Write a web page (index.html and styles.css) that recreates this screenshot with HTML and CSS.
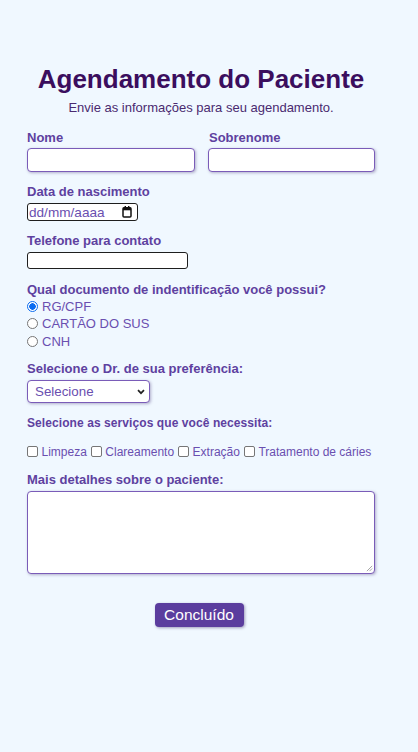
FILE: index.html
```html
<!DOCTYPE html>
<html lang="pt-BR">
<head>
<meta charset="utf-8">
<title>Agendamento do Paciente</title>
<link rel="stylesheet" href="styles.css">
</head>
<body>
<main class="page">
  <h1 class="title">Agendamento do Paciente</h1>
  <p class="subtitle">Envie as informações para seu agendamento.</p>
  <form class="form">
    <div class="name-grid">
      <div class="field">
        <label class="label" for="nome">Nome</label>
        <input class="input" id="nome" type="text">
      </div>
      <div class="field">
        <label class="label" for="sobrenome">Sobrenome</label>
        <input class="input" id="sobrenome" type="text">
      </div>
    </div>

    <label class="label label-date" for="nasc">Data de nascimento</label>
    <div class="date-box"><span class="date-text">dd/mm/aaaa</span><svg class="cal" viewBox="0 0 10 12" width="10" height="12"><rect x="1" y="1.7" width="8" height="9.3" rx="1" fill="none" stroke="#111" stroke-width="1.5"/><rect x="1" y="1.7" width="8" height="2.6" fill="#111"/><rect x="2.6" y="0" width="1.4" height="2.2" fill="#111"/><rect x="6" y="0" width="1.4" height="2.2" fill="#111"/></svg></div>

    <label class="label label-tel" for="tel">Telefone para contato</label>
    <input class="tel" id="tel" type="tel">

    <div class="label label-doc">Qual documento de indentificação você possui?</div>
    <div class="radios">
      <label class="radio-row"><span class="radio checked"></span>RG/CPF</label>
      <label class="radio-row"><span class="radio"></span>CARTÃO DO SUS</label>
      <label class="radio-row"><span class="radio"></span>CNH</label>
    </div>

    <label class="label label-dr" for="dr">Selecione o Dr. de sua preferência:</label>
    <div class="select"><span>Selecione</span><svg class="chev" viewBox="0 0 8 6" width="8" height="6"><path d="M1 1.2l3 3 3-3" fill="none" stroke="#222" stroke-width="1.7"/></svg></div>

    <div class="label label-serv">Selecione as serviços que você necessita:</div>
    <div class="checks">
      <span class="check"></span><span class="check-text">Limpeza</span>
      <span class="check"></span><span class="check-text">Clareamento</span>
      <span class="check"></span><span class="check-text">Extração</span>
      <span class="check"></span><span class="check-text">Tratamento de cáries</span>
    </div>

    <label class="label label-more" for="det">Mais detalhes sobre o paciente:</label>
    <div class="textarea"><svg class="grip" viewBox="0 0 8 8" width="7" height="7"><path d="M7 1L1 7M7 4L4 7" stroke="#999" stroke-width="1"/></svg></div>

    <div class="actions"><button class="btn" type="button">Concluído</button></div>
  </form>
</main>
</body>
</html>
```
FILE: styles.css
```css
* { box-sizing: border-box; }
html, body { margin: 0; padding: 0; }
body {
  background: #f0f8ff;
  font-family: "Liberation Sans", Arial, sans-serif;
  width: 418px;
  height: 752px;
}
.page {
  padding: 64px 43px 0 27px;
}
.title {
  margin: 0;
  font-size: 26px;
  line-height: 30px;
  font-weight: 700;
  color: #3b0e5e;
  text-align: center;
}
.subtitle {
  margin: 6px 0 0;
  font-size: 13px;
  line-height: 16px;
  color: #4a2a70;
  text-align: center;
}
.form {
  display: flex;
  flex-direction: column;
  align-items: flex-start;
  margin-top: 14px;
  width: 348px;
}
.name-grid {
  display: grid;
  grid-template-columns: 168px 167px;
  column-gap: 13px;
  width: 100%;
}
.field { display: flex; flex-direction: column; }
.label {
  display: block;
  font-size: 13px;
  line-height: 16px;
  font-weight: 700;
  color: #5e41a0;
}
.field .label { margin-bottom: 2px; }
.field:nth-child(2) .label { padding-left: 1px; }
.input {
  height: 24px;
  border: 1.5px solid #7a5cb8;
  border-radius: 4px;
  background: #fff;
  box-shadow: 1px 1px 3px rgba(60, 40, 110, 0.35);
  outline: none;
  width: 100%;
  margin: 0;
}
.label-date { margin-top: 12px; }
.date-box {
  margin-top: 3px;
  width: 111px;
  height: 18px;
  border: 1.5px solid #1e1e1e;
  border-radius: 3px;
  background: #fff;
  display: flex;
  align-items: center;
  justify-content: space-between;
  padding: 0 5px 0 1px;
}
.date-text { font-size: 13.6px; color: #6a4fb0; line-height: 15px; }
.cal { display: block; }
.label-tel { margin-top: 12px; }
.tel {
  margin: 3px 0 0;
  width: 161px;
  height: 17px;
  border: 1.5px solid #1e1e1e;
  border-radius: 3px;
  background: #fff;
  outline: none;
}
.label-doc { margin-top: 13px; }
.radios { display: flex; flex-direction: column; margin-top: -0.5px; }
.radio-row {
  display: flex;
  align-items: center;
  height: 17.5px;
  font-size: 13px;
  color: #6a4fb0;
}
.radio {
  width: 11px;
  height: 11px;
  border-radius: 50%;
  border: 1px solid #767676;
  background: #fff;
  margin: 0 4px 0 0;
  flex: none;
}
.radio.checked {
  border: 1px solid #0b6cf0;
  background: radial-gradient(circle, #0b6cf0 0 3px, #fff 3.5px);
}
.label-dr { margin-top: 11px; }
.select {
  margin-top: 3px;
  width: 123px;
  height: 23px;
  border: 1.5px solid #7a5cb8;
  border-radius: 4px;
  background: #fff;
  box-shadow: 1px 1px 3px rgba(60, 40, 110, 0.35);
  display: flex;
  align-items: center;
  justify-content: space-between;
  padding: 0 4px 0 7px;
  font-size: 13.33px;
  color: #6a4fb0;
}
.chev { display: block; }
.label-serv {
  margin-top: 13px;
  font-size: 12px;
  line-height: 15px;
  letter-spacing: 0.08px;
}
.checks {
  margin-top: 12px;
  display: flex;
  align-items: center;
  height: 17px;
  font-size: 12px;
  color: #6a4fb0;
  white-space: nowrap;
}
.check {
  width: 11px;
  height: 11px;
  border: 1px solid #767676;
  border-radius: 2px;
  background: #fff;
  margin-right: 3.5px;
  flex: none;
}
.check-text { margin-right: 4px; }
.label-more { margin-top: 12px; }
.textarea {
  margin-top: 3px;
  width: 348px;
  height: 83px;
  border: 1.5px solid #7a5cb8;
  border-radius: 4px;
  background: #fff;
  box-shadow: 1px 1px 3px rgba(60, 40, 110, 0.35);
  position: relative;
}
.grip { position: absolute; right: 1px; bottom: 1px; }
.actions {
  width: 348px;
  display: flex;
  justify-content: center;
  margin-top: 29px;
  padding-right: 4px;
}
.btn {
  width: 89px;
  height: 24px;
  border: none;
  border-radius: 4px;
  background: #5b3d9e;
  color: #fff;
  font-family: "Liberation Sans", Arial, sans-serif;
  font-size: 15.5px;
  padding: 0;
  box-shadow: 1px 1px 3px rgba(40, 20, 90, 0.4);
}
```
